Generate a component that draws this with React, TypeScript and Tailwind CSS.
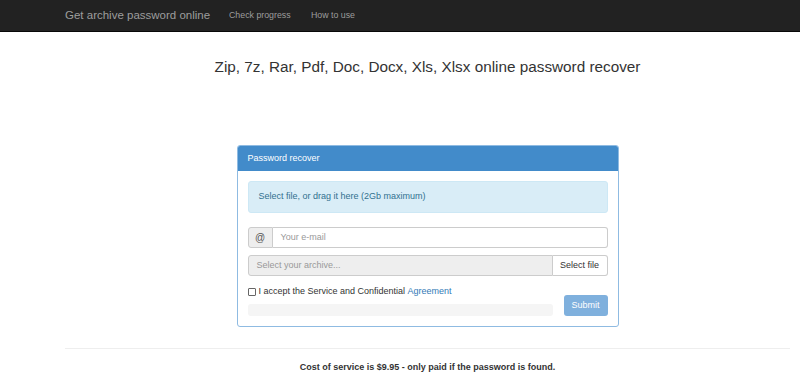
const App = () => {
  return (
    <div className="min-h-[378px] bg-white font-['Liberation_Sans',Arial,sans-serif] text-[#333]">
      <nav className="h-8 border-b border-[#080808] bg-[#222]">
        <div className="ml-[65px] flex h-full w-[725px] items-center">
          <a className="w-[164px] text-[11.5px] text-[#9d9d9d]">Get archive password online</a>
          <a className="w-[82px] text-[8.8px] text-[#9d9d9d]">Check progress</a>
          <a className="text-[8.8px] text-[#9d9d9d]">How to use</a>
        </div>
      </nav>

      <div className="ml-[65px] w-[725px]">
        <h1 className="mt-[26px] text-center text-[15.3px] leading-[18px] text-[#333]">
          Zip, 7z, Rar, Pdf, Doc, Docx, Xls, Xlsx online password recover
        </h1>

        <div className="mx-auto mt-[69px] w-[382px] rounded-[3px] border border-[#8fbbe2] bg-white">
          <div className="flex h-[25px] items-center rounded-t-[2px] bg-[#428bca] px-[10px] text-[9px] text-white">
            Password recover
          </div>
          <div className="px-[10px] pt-[10px] pb-[10px]">
            <div className="flex h-[32px] items-center rounded-[3px] border border-[#cde8f5] bg-[#d9edf7] px-[10px] text-[9px] text-[#31708f]">
              Select file, or drag it here (2Gb maximum)
            </div>

            <div className="mt-[14px] flex h-[21px] text-[9px]">
              <span className="flex w-[25px] items-center justify-center rounded-l-[3px] border border-[#ccc] bg-[#eee] text-[10px] text-[#555]">
                @
              </span>
              <div className="flex flex-1 items-center rounded-r-[3px] border border-l-0 border-[#ccc] bg-white px-[8px] text-[#999]">
                Your e-mail
              </div>
            </div>

            <div className="mt-[7px] flex h-[21px] text-[9px]">
              <div className="flex flex-1 items-center rounded-l-[3px] border border-[#ccc] bg-[#eee] px-[8px] text-[#999]">
                Select your archive...
              </div>
              <div className="flex w-[55px] items-center justify-center rounded-r-[3px] border border-l-0 border-[#ccc] bg-white text-[#333]">
                Select file
              </div>
            </div>

            <div className="mt-[9px] flex items-start">
              <div className="flex-1 pr-[11px]">
                <div className="flex h-[14px] items-center text-[9px] text-[#333]">
                  <span className="mr-[3px] h-[8px] w-[8px] rounded-[1px] border border-[#666] bg-white" />
                  I accept the Service and Confidential&nbsp;
                  <span className="text-[#337ab7]">Agreement</span>
                </div>
                <div className="mt-[5px] h-[12px] rounded-[3px] bg-[#f5f5f5]" />
              </div>
              <div className="mt-[10px] flex h-[21px] w-[44px] items-center justify-center rounded-[3px] bg-[#7fb0dd] text-[9px] text-white">
                Submit
              </div>
            </div>
          </div>
        </div>

        <div className="mt-[21px] border-t border-[#eee]" />
        <p className="mt-[12px] text-center text-[9px] leading-[12px] font-bold text-[#333]">
          Cost of service is $9.95 - only paid if the password is found.
        </p>
      </div>
    </div>
  );
};

export default App;
